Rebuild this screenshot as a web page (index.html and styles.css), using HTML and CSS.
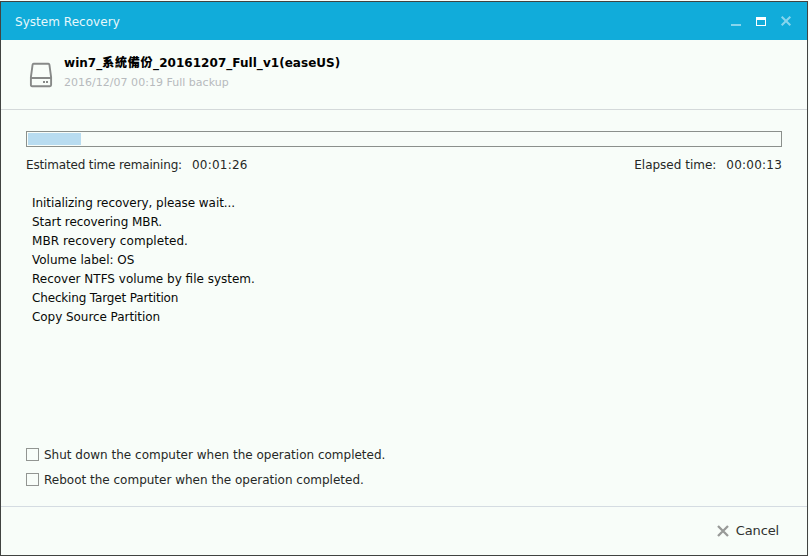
FILE: index.html
```html
<!DOCTYPE html>
<html lang="en">
<head>
<meta charset="utf-8">
<title>System Recovery</title>
<link rel="stylesheet" href="styles.css">
</head>
<body>
<main class="window">
  <header class="titlebar">
    <h1 class="title">System Recovery</h1>
    <svg class="controls" width="62" height="12" viewBox="0 0 62 12" shape-rendering="crispEdges">
      <rect x="0" y="8" width="10" height="2" fill="#87d5ed"/>
      <path fill="#fff" fill-rule="evenodd" d="M25 1h10v9H25zM26 4v5h8V4z"/>
      <path d="M50.700 .7l8.600 8.600M59.300 .7l-8.600 8.600" stroke="#87d5ed" stroke-width="2" fill="none" shape-rendering="auto"/>
    </svg>
  </header>
  <section class="backup">
    <svg class="drive" width="24" height="26" viewBox="0 0 24 26" fill="none" stroke="#878988" stroke-width="1.9">
      <path d="M4.600 1.800h14.800q.8 0 1 .9l1.700 12.300v8q0 1.200-1.200 1.200H3.100q-1.200 0-1.200-1.200v-8L3.600 2.700q.2-.9 1-.9zM2 16h20"/>
      <path d="M14 20h2M17 20h2" stroke-width="2"/>
    </svg>
    <div>
      <h2 class="name">win7_<span class="cjk">系統備份</span>_20161207_Full_v1(easeUS)</h2>
      <p class="date">2016/12/07 00:19 Full backup</p>
    </div>
  </section>
  <section class="body">
    <div class="progress"><div class="fill"></div></div>
    <div class="times">
      <p><span class="est">Estimated time remaining:</span><span class="clock">00:01:26</span></p>
      <p><span class="ela">Elapsed time:</span><span class="clock">00:00:13</span></p>
    </div>
    <ul class="log">
      <li class="tight">Initializing recovery, please wait...</li>
      <li class="tight">Start recovering MBR.</li>
      <li class="loose">MBR recovery completed.</li>
      <li>Volume label: OS</li>
      <li>Recover NTFS volume by file system.</li>
      <li class="tighter">Checking Target Partition</li>
      <li class="tight">Copy Source Partition</li>
    </ul>
    <div class="options">
      <label class="option"><input type="checkbox"><span>Shut down the computer when the operation completed.</span></label>
      <label class="option"><input type="checkbox"><span>Reboot the computer when the operation completed.</span></label>
    </div>
  </section>
  <footer class="footer">
    <button class="cancel" type="button">
      <svg width="12" height="12" viewBox="0 0 12 12"><path d="M1 1l10 10M11 1L1 11" stroke="#989a98" stroke-width="2.3" fill="none"/></svg>
      <span>Cancel</span>
    </button>
  </footer>
</main>
</body>
</html>
```
FILE: styles.css
```css
* { box-sizing: border-box; margin: 0; padding: 0; }
html { background: #f8fdf9; }
body {
  height: 556px;
  padding: 1px 1px 0 0;
  overflow: hidden;
  font: 12px/19px "DejaVu Sans", "Noto Sans CJK TC", sans-serif;
  color: #262826;
}
.window {
  display: flex;
  flex-direction: column;
  height: 555px;
  border: 1px solid #414341;
  background: #f8fdf9;
}
.titlebar {
  display: flex;
  align-items: center;
  justify-content: space-between;
  flex: none;
  height: 38px;
  padding: 0 14px;
  background: #11acda;
}
.title { padding-top: 2px; font-size: 12px; font-weight: normal; letter-spacing: 0.04px; color: #e6f8fc; }
.controls { margin-top: 1px; }
.backup {
  display: flex;
  flex: none;
  gap: 11px;
  height: 70px;
  padding: 14px 0 0 28px;
  border-bottom: 1px solid #d4d9da;
}
.drive { margin-top: 8px; }
.name { font-size: 12px; line-height: 19px; letter-spacing: 0.04px; color: #000; white-space: nowrap; }
.cjk { font-weight: 900; line-height: 1; letter-spacing: 0.7px; }
.date { font-size: 11px; line-height: 20px; letter-spacing: 0.02px; color: #b7babd; }
.body { display: flex; flex-direction: column; flex: 1; padding: 21px 25px 17px; }
.progress { flex: none; height: 16px; padding: 1px; border: 1px solid #8b908c; }
.fill { width: 53px; height: 12px; background: #b8dcf0; }
.times { display: flex; justify-content: space-between; margin-top: 9px; }
.est { letter-spacing: -0.16px; }
.clock { margin-left: 10px; letter-spacing: 0.22px; }
.log { margin: 19px 0 0 6px; list-style: none; color: #080a08; }
.tight { letter-spacing: -0.055px; }
.tighter { letter-spacing: -0.16px; }
.loose { letter-spacing: 0.06px; }
.options { display: grid; gap: 6px; margin-top: auto; }
.option { display: flex; align-items: center; gap: 5px; height: 19px; }
.option span { padding-top: 2px; }
.option input { appearance: none; width: 13px; height: 13px; border: 1px solid #929592; }
.footer {
  display: flex;
  align-items: center;
  justify-content: flex-end;
  flex: none;
  height: 49px;
  padding-right: 28px;
  border-top: 1px solid #d5dce2;
}
.cancel {
  display: flex;
  align-items: center;
  gap: 7px;
  border: 0;
  background: none;
  font: 13px/19px "DejaVu Sans", sans-serif;
  letter-spacing: -0.15px;
  color: #303230;
}
.cancel span { padding-bottom: 2px; }
```
